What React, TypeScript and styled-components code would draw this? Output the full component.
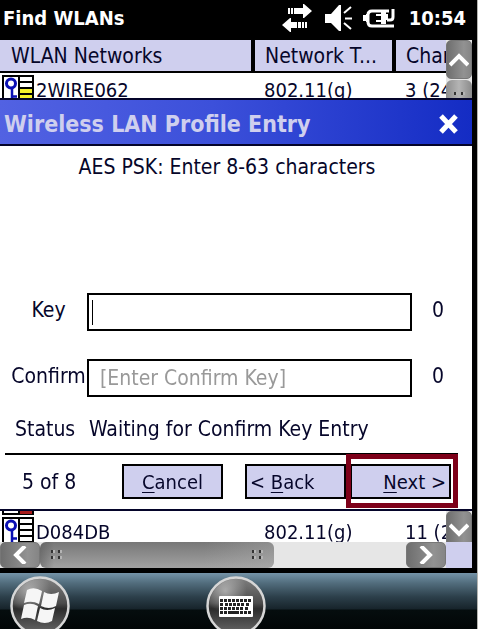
import React from "react";
import styled, { createGlobalStyle, css } from "styled-components";

const ink = "#06062a";
const lavender = "#cfcfee";

const GlobalStyle = createGlobalStyle`
  * { box-sizing: border-box; }
  body { margin: 0; background: #000; }
  body, button, input, table {
    font-family: "DejaVu Sans Condensed", "Noto Sans", sans-serif;
    font-size: 21px;
    line-height: 24px;
    color: ${ink};
  }
`;

const Device = styled.div`
  min-height: 100vh;
  display: flex;
  flex-direction: column;
  background: #000;
  border-right: 1px solid #b4b4b0;
`;

const Screen = styled.main`
  margin-right: 5px;
  background: #fff;
`;

const StatusBar = styled.header`
  display: flex;
  align-items: center;
  height: 40px;
  padding: 0 6px 4px 3px;
  background: #000;
  color: #fff;
`;

const AppTitle = styled.h1`
  flex: 1;
  margin: 0;
  font-size: 20px;
  line-height: 24px;
`;

const Clock = styled.time`
  margin-left: 12px;
  font-size: 20px;
  font-weight: bold;
`;

const ListArea = styled.section<{ $height: number }>`
  display: grid;
  grid-template-columns: minmax(0, 1fr) 26px;
  height: ${(p) => p.$height}px;
  overflow: hidden;
`;

const NetworkTable = styled.table`
  width: 100%;
  table-layout: fixed;
  border-spacing: 0;
`;

const cell = css`
  padding: 0;
  text-align: left;
  font-weight: normal;
  white-space: nowrap;
  overflow: hidden;
`;

const HeadCell = styled.th`
  ${cell}
  height: 33px;
  padding-left: 11px;
  background: ${lavender};
  border-bottom: 2px solid #000;
  & + & { border-left: 4px solid #000; padding-left: 10px; }
`;

const Cell = styled.td`
  ${cell}
  height: 32px;
  padding-left: 13px;
  vertical-align: top;
  font-size: 20px;
  line-height: 34px;
`;

const NameCell = styled(Cell)`
  padding: 2px 0 0 2px;
`;

const SliverCell = styled(NameCell)`
  height: 4px;
  padding-top: 0;
  line-height: 0;
  svg { display: block; }
`;

const NetworkName = styled.span`
  display: flex;
  gap: 2px;
  line-height: 30px;
`;

const VerticalTrack = styled.div<{ $end?: boolean }>`
  display: flex;
  flex-direction: column;
  justify-content: ${(p) => (p.$end ? "flex-end" : "flex-start")};
  min-height: 0;
  gap: 1px;
  background: #e6e6e6;
`;

const ScrollButton = styled.button<{ $w: number; $h: number }>`
  display: flex;
  align-items: center;
  justify-content: center;
  flex: none;
  width: ${(p) => p.$w}px;
  height: ${(p) => p.$h}px;
  padding: 0;
  border: 1px solid #777;
  border-radius: 5px;
  background: linear-gradient(90deg, #6e6e6e, #929292 70%, #858585);
`;

const VerticalThumb = styled.div`
  display: flex;
  align-items: flex-start;
  justify-content: center;
  flex: 1;
  padding-top: 12px;
  border-radius: 6px 6px 0 0;
  background: linear-gradient(90deg, #8e8e8e, #b4b4b4 50%, #8a8a8a);
`;

const Dialog = styled.section`
  border: solid #04042a;
  border-width: 2px 0;
  background: #fff;
`;

const DialogHeader = styled.header`
  display: flex;
  align-items: center;
  height: 46px;
  padding: 0 12px 0 4px;
  border-bottom: 2px solid #04042a;
  background: linear-gradient(90deg, #5262e2, #3c50da 45%, #142cc4);
`;

const DialogTitle = styled.h2`
  flex: 1;
  margin: 0;
  font-size: 23px;
  line-height: 32px;
  padding-top: 4px;
  color: ${lavender};
`;

const IconButton = styled.button`
  display: flex;
  padding: 4px 0 0;
  border: 0;
  background: none;
`;

const Prompt = styled.p`
  margin: 0;
  padding: 9px 18px 114px 0;
  text-align: center;
`;

const Field = styled.div`
  display: grid;
  grid-template-columns: 87px minmax(0, 1fr) 60px;
  align-items: center;
`;

const Fields = styled.div`
  display: flex;
  flex-direction: column;
  gap: 28px;
`;

const FieldLabel = styled.label`
  padding: 0 0 4px 10px;
  text-align: center;
  white-space: nowrap;
`;

const KeyInput = styled.input`
  width: 100%;
  height: 38px;
  padding: 0 0 0 3px;
  border: 2px solid #000;
  border-radius: 0;
  outline: 0;
  background: #fff;
  &::placeholder { color: #999; opacity: 1; padding-left: 8px; }
  &:focus:placeholder-shown {
    caret-color: transparent;
    background: linear-gradient(#000, #000) 3px 50% / 1px 25px no-repeat #fff;
  }
`;

const Count = styled.output`
  padding: 0 8px 4px 0;
  text-align: center;
`;

const StatusLine = styled.p`
  display: flex;
  margin: 0;
  padding: 20px 0 12px 15px;
`;

const StatusLabel = styled.span`
  width: 74px;
`;

const Footer = styled.footer`
  display: flex;
  align-items: center;
  margin: 0 14px 0 5px;
  padding: 9px 7px 10px 17px;
  border-top: 2px solid #000;
`;

const Step = styled.span`
  flex: 1;
`;

const Actions = styled.div`
  display: flex;
  gap: 4px;
`;

const Action = styled.button<{ $align?: string; $spaced?: boolean }>`
  width: 101px;
  height: 35px;
  margin-right: ${(p) => (p.$spaced ? 18 : 0)}px;
  padding: 0 3px;
  border: 2px solid #000;
  border-radius: 0;
  background: ${lavender};
  font-size: 20px;
  text-align: ${(p) => p.$align || "center"};
  white-space: nowrap;
  u { text-underline-offset: 3px; text-decoration-thickness: 1px; }
`;

const Highlight = styled.div`
  position: relative;
  &::after {
    content: "";
    position: absolute;
    inset: -10px -7px -9px -4px;
    border: 5px solid #7d0019;
    pointer-events: none;
  }
`;

const HorizontalBar = styled.div`
  display: flex;
  height: 26px;
  background: #e6e6e6;
`;

const HorizontalThumb = styled.div`
  display: flex;
  align-items: center;
  justify-content: space-between;
  flex: 0 1 234px;
  padding: 0 11px;
  border-radius: 6px;
  background: linear-gradient(90deg, #5558, transparent 14px, transparent 70%, #b0b0b066),
    linear-gradient(#777, #a2a2a2);
`;

const Spacer = styled.div`
  flex: 1;
`;

const Corner = styled.div`
  width: 26px;
  background: ${lavender};
`;

const Taskbar = styled.nav`
  display: grid;
  grid-template-columns: minmax(0, 1fr) 60px minmax(0, 1fr);
  flex: 1;
  min-height: 56px;
  max-height: 56px;
  margin-top: 5px;
  padding: 3px 16px 0 10px;
  overflow: hidden;
  background: linear-gradient(#7593a8, #526d7d 10px, #2c3f4a 24px, #17242b 36px, #050d0e 37px, #020607);
`;

const RoundButton = styled.button`
  display: block;
  width: 60px;
  height: 60px;
  padding: 0;
  border: 0;
  background: none;
`;

function SecurityIcon({ signal }: { signal?: string }) {
  return (
    <svg width="32" height="32" viewBox="0 0 32 32" aria-hidden="true" shapeRendering="crispEdges">
      <rect x="1" y="1" width="30" height="30" fill="#fff" stroke="#000" strokeWidth="2" />
      {signal && <path d="M18 14h12v4H18zM18 20h12v4H18z" fill={signal} />}
      <path d="M17 0v32M17 7h14M17 13h14M17 19h14M17 25h14" stroke="#000" strokeWidth="2" fill="none" />
      <g fill="none" stroke="#0b10b4" shapeRendering="auto">
        <circle cx="9" cy="8.500" r="4.500" strokeWidth="3" />
        <path d="M10 13v16M10 21.500h5M10 26.500h5" strokeWidth="2.500" />
      </g>
    </svg>
  );
}

function Chevron({ points, w, h }: { points: string; w: number; h: number }) {
  return (
    <svg width={w} height={h} viewBox={`0 0 ${w} ${h}`} aria-hidden="true">
      <polyline points={points} fill="none" stroke="#fff" strokeWidth="4" />
    </svg>
  );
}

function Grip() {
  return (
    <svg width="11" height="10" viewBox="0 0 11 10" aria-hidden="true">
      <path d="M0 0h4v3H0zM7 0h4v3H7zM0 6h4v3H0zM7 6h4v3H7z" fill="#b4b4b4" />
      <path d="M0 0h2v3H0zM7 0h2v3H7zM0 6h2v3H0zM7 6h2v3H7z" fill="#333" />
    </svg>
  );
}

function StatusIcons() {
  return (
    <svg width="116" height="32" viewBox="280 2 116 32" fill="#fff" role="img" aria-label="Connected, sound on, charging">
      <path d="M287 8h2v6h-2zM290 8h2v6h-2zM293 8h9V4h1l8 7-8 7h-1v-4h-9z" />
      <path d="M281 25l8-7h1v4h6v6h-6v4h-1zM297 22h3v6h-3zM301 22h2v6h-2zM304 22h2v6h-2z" />
      <path d="M324 14h6l8-9h2v26h-2l-8-8h-6z" />
      <path d="M343 13l7-6M344 18.500h7M343 23l7 6" stroke="#fff" strokeWidth="2" />
      <path d="M388 11h-17q-4 0-4 4v7q0 4 4 4h22" fill="none" stroke="#fff" strokeWidth="3" />
      <path d="M362 15h3v-1h2v8h-2v-1h-3z" />
      <path d="M375 14h5v-2h5v2h2v6h-2v4h-5v-2h-5v-2h5v-4h-5z" />
      <path d="M386 20h3q3 0 3-3V9" fill="none" stroke="#fff" strokeWidth="3" />
    </svg>
  );
}

function Orb({ id, children }: { id: string; children: React.ReactNode }) {
  return (
    <svg width="60" height="60" viewBox="0 0 60 60" aria-hidden="true">
      <defs>
        <linearGradient id={id} x1="0" y1="0" x2="0" y2="1">
          <stop offset="0" stopColor="#808080" />
          <stop offset="0.450" stopColor="#4b4b4b" />
          <stop offset="0.550" stopColor="#2c2c2c" />
          <stop offset="1" stopColor="#6a6a6a" />
        </linearGradient>
        <radialGradient id={`${id}-shine`} cx="0.300" cy="0.220" r="0.400">
          <stop offset="0" stopColor="#fff" stopOpacity="0.450" />
          <stop offset="1" stopColor="#fff" stopOpacity="0" />
        </radialGradient>
      </defs>
      <circle cx="30" cy="30" r="28.500" fill={`url(#${id})`} stroke="#d6d6d6" strokeWidth="2.500" />
      <circle cx="30" cy="30" r="27" fill={`url(#${id}-shine)`} />
      {children}
    </svg>
  );
}

function Keyboard() {
  const rows = [
    [0, 4, 8, 12, 16, 20, 24, 28],
    [0, 5, 9, 13, 17, 21, 26],
    [0, 4, 8, 12, 16, 20, 25],
  ];
  return (
    <g>
      <rect x="13" y="20" width="34" height="21" rx="1" fill="#fff" />
      {rows.map((xs, r) =>
        xs.map((x) => <rect key={`${r}-${x}`} x={14 + x} y={23 + r * 4} width="3" height="3" fill="#222" />)
      )}
      <path d="M14 35h3v3h-3zM18 35h3v3h-3zM22 35h11v3H22zM34 35h3v3h-3zM38 35h3v3h-3zM42 35h3v3h-3z" fill="#222" />
    </g>
  );
}

function Columns() {
  return (
    <colgroup>
      <col width="251" />
      <col width="141" />
      <col />
    </colgroup>
  );
}

export default function App() {
  return (
    <>
      <GlobalStyle />
      <Device>
        <Screen>
          <StatusBar>
            <AppTitle>Find WLANs</AppTitle>
            <StatusIcons />
            <Clock>10:54</Clock>
          </StatusBar>

          <ListArea $height={58}>
            <NetworkTable>
              <Columns />
              <thead>
                <tr>
                  <HeadCell scope="col">WLAN Networks</HeadCell>
                  <HeadCell scope="col">Network T...</HeadCell>
                  <HeadCell scope="col">Channel</HeadCell>
                </tr>
              </thead>
              <tbody>
                <tr>
                  <NameCell>
                    <NetworkName>
                      <SecurityIcon signal="#f4f02a" />
                      2WIRE062
                    </NetworkName>
                  </NameCell>
                  <Cell>802.11(g)</Cell>
                  <Cell>3 (2422)</Cell>
                </tr>
              </tbody>
            </NetworkTable>
            <VerticalTrack>
              <ScrollButton $w={26} $h={39} aria-label="Scroll up">
                <Chevron w={20} h={15} points="1,13 10,4 19,13" />
              </ScrollButton>
              <VerticalThumb>
                <Grip />
              </VerticalThumb>
            </VerticalTrack>
          </ListArea>

          <Dialog role="dialog" aria-labelledby="dialog-title">
            <DialogHeader>
              <DialogTitle id="dialog-title">Wireless LAN Profile Entry</DialogTitle>
              <IconButton aria-label="Close">
                <svg width="21" height="20" viewBox="0 0 21 20" aria-hidden="true">
                  <path d="M2 2l15 16M17 2L2 18" stroke="#fff" strokeWidth="5" />
                </svg>
              </IconButton>
            </DialogHeader>
            <form onSubmit={(e) => e.preventDefault()}>
              <Prompt>AES PSK: Enter 8-63 characters</Prompt>
              <Fields>
                <Field>
                  <FieldLabel htmlFor="key">Key</FieldLabel>
                  <KeyInput id="key" placeholder=" " autoFocus />
                  <Count htmlFor="key">0</Count>
                </Field>
                <Field>
                  <FieldLabel htmlFor="confirm">Confirm</FieldLabel>
                  <KeyInput id="confirm" placeholder="[Enter Confirm Key]" />
                  <Count htmlFor="confirm">0</Count>
                </Field>
              </Fields>
              <StatusLine>
                <StatusLabel>Status</StatusLabel>
                <span>Waiting for Confirm Key Entry</span>
              </StatusLine>
              <Footer>
                <Step>5 of 8</Step>
                <Actions>
                  <Action type="button" $spaced>
                    <u>C</u>ancel
                  </Action>
                  <Action type="button" $align="left">
                    &lt; <u>B</u>ack
                  </Action>
                  <Highlight>
                    <Action type="submit" $align="right">
                      <u>N</u>ext &gt;
                    </Action>
                  </Highlight>
                </Actions>
              </Footer>
            </form>
          </Dialog>

          <ListArea $height={31}>
            <NetworkTable>
              <Columns />
              <tbody>
                <tr>
                  <SliverCell colSpan={3}>
                    <svg width="32" height="4" viewBox="0 0 32 4" aria-hidden="true" shapeRendering="crispEdges">
                      <path d="M0 0h32v4H0z" />
                      <path d="M2 0h14v2H2z" fill="#fff" />
                      <path d="M18 0h12v3H18z" fill="#a81c1c" />
                    </svg>
                  </SliverCell>
                </tr>
                <tr>
                  <NameCell>
                    <NetworkName>
                      <SecurityIcon />
                      D084DB
                    </NetworkName>
                  </NameCell>
                  <Cell>802.11(g)</Cell>
                  <Cell>11 (2462)</Cell>
                </tr>
              </tbody>
            </NetworkTable>
            <VerticalTrack $end>
              <ScrollButton $w={26} $h={38} aria-label="Scroll down">
                <Chevron w={20} h={15} points="1,2 10,11 19,2" />
              </ScrollButton>
            </VerticalTrack>
          </ListArea>

          <HorizontalBar>
            <ScrollButton $w={40} $h={26} aria-label="Scroll left">
              <Chevron w={14} h={18} points="12,0 3,9 12,18" />
            </ScrollButton>
            <HorizontalThumb>
              <Grip />
              <Grip />
            </HorizontalThumb>
            <Spacer />
            <ScrollButton $w={40} $h={26} aria-label="Scroll right">
              <Chevron w={14} h={18} points="2,0 11,9 2,18" />
            </ScrollButton>
            <Corner />
          </HorizontalBar>
        </Screen>

        <Taskbar>
          <RoundButton aria-label="Start">
            <Orb id="orb-start">
              <path
                d="M17 14q7-4 15 1l-3 13q-7-4-15-1zM34 16q7 4 15 0l-3 14q-7 4-15 0zM14 29q7-3 14 1l-3 14q-7-4-14-1zM30 32q7 4 15 0l-3 13q-7 4-15 0z"
                fill="#f6f6f6"
              />
            </Orb>
          </RoundButton>
          <RoundButton aria-label="Keyboard">
            <Orb id="orb-keyboard">
              <Keyboard />
            </Orb>
          </RoundButton>
        </Taskbar>
      </Device>
    </>
  );
}
